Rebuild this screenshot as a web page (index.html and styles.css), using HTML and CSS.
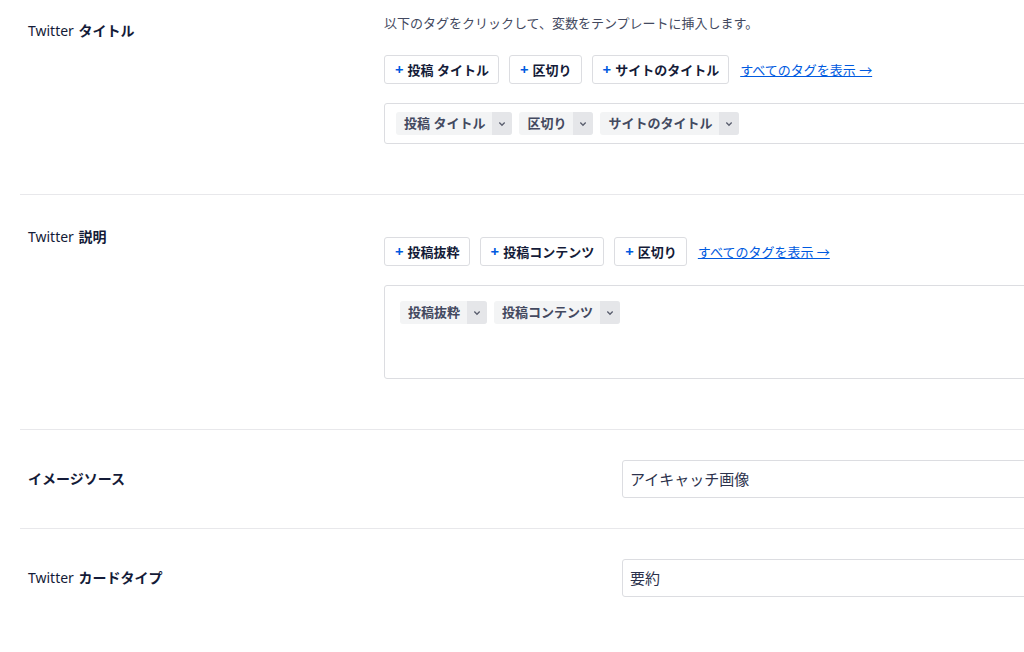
FILE: index.html
```html
<!DOCTYPE html>
<html lang="ja">
<head>
<meta charset="utf-8">
<link rel="stylesheet" href="styles.css">
</head>
<body>
<div class="page">
  <div class="row row-title">
    <div class="label"><span class="latin">Twitter</span> タイトル</div>
    <div class="field">
      <div class="help">以下のタグをクリックして、変数をテンプレートに挿入します。</div>
      <div class="tags">
        <button class="tag-btn"><span class="plus">+</span>投稿 タイトル</button>
        <button class="tag-btn"><span class="plus">+</span>区切り</button>
        <button class="tag-btn"><span class="plus">+</span>サイトのタイトル</button>
        <a class="all-tags" href="#">すべてのタグを表示 →</a>
      </div>
      <div class="editor editor-single">
        <span class="chip"><span class="chip-text">投稿 タイトル</span><span class="chev"><svg viewBox="0 0 10 10" width="10" height="10"><path d="M2.3 3.6 L5 6.3 L7.7 3.6" fill="none" stroke="#5c6070" stroke-width="1.4"/></svg></span></span>
        <span class="chip"><span class="chip-text">区切り</span><span class="chev"><svg viewBox="0 0 10 10" width="10" height="10"><path d="M2.3 3.6 L5 6.3 L7.7 3.6" fill="none" stroke="#5c6070" stroke-width="1.4"/></svg></span></span>
        <span class="chip"><span class="chip-text">サイトのタイトル</span><span class="chev"><svg viewBox="0 0 10 10" width="10" height="10"><path d="M2.3 3.6 L5 6.3 L7.7 3.6" fill="none" stroke="#5c6070" stroke-width="1.4"/></svg></span></span>
      </div>
    </div>
  </div>

  <div class="row row-desc">
    <div class="label"><span class="latin">Twitter</span> 説明</div>
    <div class="field field-desc">
      <div class="tags">
        <button class="tag-btn"><span class="plus">+</span>投稿抜粋</button>
        <button class="tag-btn"><span class="plus">+</span>投稿コンテンツ</button>
        <button class="tag-btn"><span class="plus">+</span>区切り</button>
        <a class="all-tags" href="#">すべてのタグを表示 →</a>
      </div>
      <div class="editor editor-multi">
        <span class="chip"><span class="chip-text">投稿抜粋</span><span class="chev"><svg viewBox="0 0 10 10" width="10" height="10"><path d="M2.3 3.6 L5 6.3 L7.7 3.6" fill="none" stroke="#5c6070" stroke-width="1.4"/></svg></span></span>
        <span class="chip"><span class="chip-text">投稿コンテンツ</span><span class="chev"><svg viewBox="0 0 10 10" width="10" height="10"><path d="M2.3 3.6 L5 6.3 L7.7 3.6" fill="none" stroke="#5c6070" stroke-width="1.4"/></svg></span></span>
      </div>
    </div>
  </div>

  <div class="row row-select">
    <div class="label">イメージソース</div>
    <div class="select">アイキャッチ画像</div>
  </div>

  <div class="row row-select last">
    <div class="label"><span class="latin">Twitter</span> カードタイプ</div>
    <div class="select">要約</div>
  </div>
</div>
</body>
</html>
```

FILE: styles.css
```css
html, body {
  margin: 0;
  padding: 0;
  background: #ffffff;
  overflow: hidden;
}

body {
  font-family: "Noto Sans", "Noto Sans CJK JP", sans-serif;
  color: #141b38;
}

.page {
  margin-left: 20px;
  width: 1160px;
}

.row {
  display: grid;
  grid-template-columns: 356px 1fr;
  padding-left: 8px;
  border-bottom: 1px solid #e8e8eb;
}

.row.last {
  border-bottom: none;
}

.label {
  font-size: 14px;
  line-height: 18px;
  font-weight: 700;
  color: #141b38;
}

.latin {
  font-weight: 400;
  margin-right: 1px;
}

.row-title {
  padding-top: 14px;
  padding-bottom: 50px;
}

.row-title .label {
  margin-top: 8px;
}

.help {
  font-size: 13px;
  line-height: 18px;
  color: #434960;
  margin-bottom: 23px;
}

.tags {
  display: flex;
  align-items: center;
  gap: 10px;
  height: 29px;
}

.tag-btn {
  height: 29px;
  box-sizing: border-box;
  border: 1px solid #dcdde1;
  border-radius: 3px;
  background: #ffffff;
  padding: 0 9px 0 10px;
  font-family: "Noto Sans", "Noto Sans CJK JP", sans-serif;
  font-size: 13px;
  font-weight: 700;
  color: #141b38;
  display: flex;
  align-items: center;
  cursor: pointer;
}

.plus {
  color: #005ae0;
  font-weight: 700;
  font-size: 15px;
  margin-right: 4px;
  line-height: 1;
}

.all-tags {
  font-size: 13px;
  color: #005ae0;
  text-decoration: underline;
  margin-left: 1px;
}

.editor {
  margin-top: 19px;
  box-sizing: border-box;
  border: 1px solid #dcdde1;
  border-radius: 3px;
  background: #ffffff;
  display: flex;
  align-items: flex-start;
  gap: 7px;
}

.editor-single {
  height: 41px;
  padding: 8px 11px;
}

.editor-multi {
  height: 94px;
  padding: 15px 15px;
}

.chip {
  display: inline-flex;
  height: 23px;
  border-radius: 3px;
  overflow: hidden;
  background: #f3f4f5;
}

.chip-text {
  font-size: 13px;
  font-weight: 700;
  color: #434960;
  line-height: 23px;
  padding: 0 7px 0 8px;
}

.chev {
  width: 20px;
  background: #e5e6e9;
  display: flex;
  align-items: center;
  justify-content: center;
}

.row-desc {
  padding-top: 33px;
  padding-bottom: 50px;
}

.field-desc {
  padding-top: 9px;
}

.row-select {
  grid-template-columns: 594px 1fr;
  align-items: center;
  padding-top: 30px;
  padding-bottom: 30px;
}

.select {
  height: 38px;
  box-sizing: border-box;
  border: 1px solid #dcdde1;
  border-radius: 3px;
  padding: 0 7px;
  font-size: 15px;
  line-height: 36px;
  color: #2c324c;
}
```
